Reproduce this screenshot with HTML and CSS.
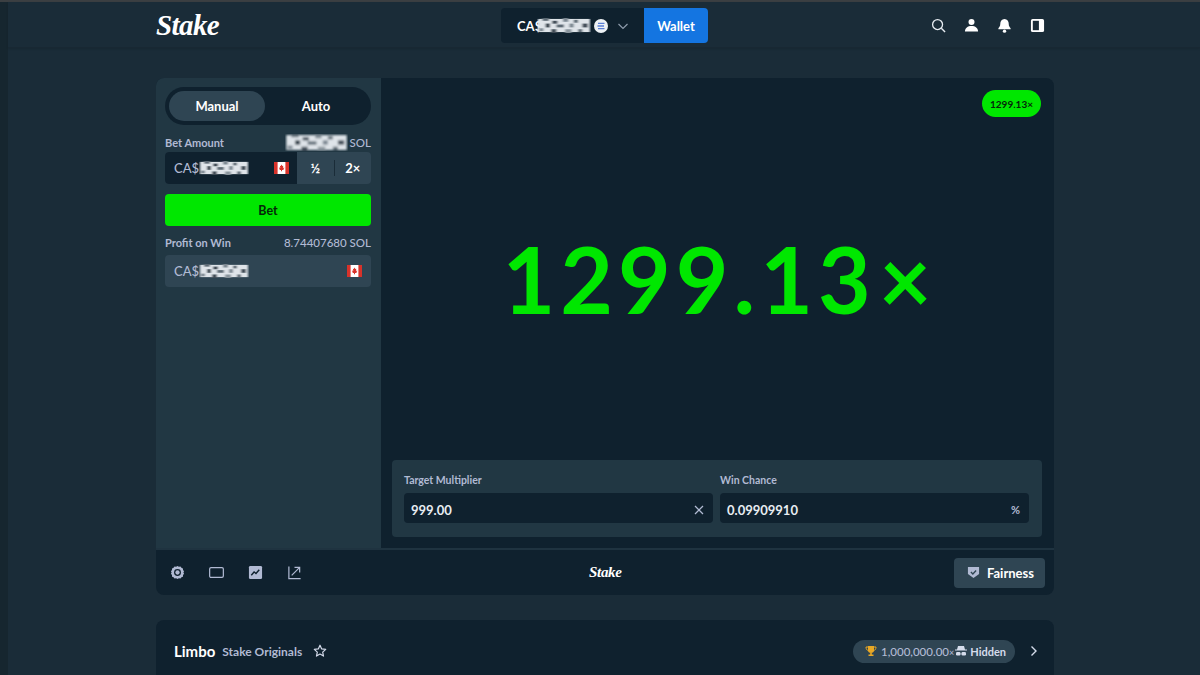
FILE: index.html
```html
<!DOCTYPE html>
<html lang="en">
<head>
<meta charset="utf-8">
<title>Limbo - Stake Originals</title>
<link rel="stylesheet" href="styles.css">
</head>
<body>
<svg class="defs" width="0" height="0" aria-hidden="true">
  <defs>
    <filter id="soft" x="-5%" y="-5%" width="110%" height="110%"><feGaussianBlur stdDeviation="0.85"/></filter>
    <symbol id="pix" viewBox="0 0 50 16" preserveAspectRatio="none">
      <g filter="url(#soft)">
        <rect x="1" y="1" width="48" height="14" fill="#dfe4e9"/>
        <rect x="5" y="0" width="6" height="3" fill="#5d6a74"/>
        <rect x="14" y="3" width="5" height="3" fill="#3f4c57"/>
        <rect x="24" y="0" width="5" height="4" fill="#7b8791"/>
        <rect x="34" y="2" width="4" height="3" fill="#5d6a74"/>
        <rect x="8" y="6" width="4" height="4" fill="#2f3c47"/>
        <rect x="18" y="7" width="7" height="3" fill="#5d6a74"/>
        <rect x="30" y="6" width="4" height="4" fill="#7b8791"/>
        <rect x="42" y="6" width="5" height="4" fill="#3f4c57"/>
        <rect x="2" y="11" width="4" height="3" fill="#7b8791"/>
        <rect x="13" y="12" width="5" height="4" fill="#3f4c57"/>
        <rect x="26" y="12" width="6" height="4" fill="#8a959d"/>
        <rect x="38" y="12" width="4" height="3" fill="#5d6a74"/>
      </g>
    </symbol>
    <symbol id="flag" viewBox="0 0 15 12">
      <rect width="15" height="12" rx="1" fill="#fff"/>
      <rect width="3.6" height="12" fill="#d8322a"/>
      <rect x="11.4" width="3.6" height="12" fill="#d8322a"/>
      <path d="M7.5 2.4l.9 1.7.9-.4-.4 2.2 1.2-.5.3.7-1 1 .3.8H8v1.4H7V7.900H5.500l.3-.8-1-1 .3-.7 1.200.5-.4-2.200.9.4z" fill="#d8322a"/>
    </symbol>
  </defs>
</svg>

<div class="topline"></div>
<div class="shell">
  <div class="rail"></div>
  <div class="main">
    <header class="header">
      <div class="wrap header-row">
        <span class="logo">Stake</span>
        <div class="balance">
          <div class="balance-val">
            <span class="ca">CA$</span>
            <svg class="pix pix-head"><use href="#pix"/></svg>
            <svg class="sol" viewBox="0 0 14 14"><circle cx="7" cy="7" r="7" fill="#eef2f5"/><path d="M4 4.300h6.500M3.500 7h6.500M4 9.700h6.500" stroke="#5b7fd6" stroke-width="1.300"/></svg>
            <svg class="chev" viewBox="0 0 12 12"><path d="M1.500 4l4.500 4.500L10.500 4" fill="none" stroke="#8e9bab" stroke-width="1.200"/></svg>
          </div>
          <div class="wallet">Wallet</div>
        </div>
        <div class="head-icons">
          <svg viewBox="0 0 16 16"><circle cx="7" cy="7" r="5.300" fill="none" stroke="#e8edf2" stroke-width="1.400"/><path d="M11 11l4 4" stroke="#e8edf2" stroke-width="1.500"/></svg>
          <svg viewBox="0 0 16 16"><circle cx="8" cy="4.200" r="3.200" fill="#fff"/><path d="M1 14.500c0-4 3-6 7-6s7 2 7 6z" fill="#fff"/></svg>
          <svg viewBox="0 0 16 16"><path d="M8 1c3 0 4.500 2.400 4.500 5.200 0 2.300.8 3.500 2 4.800v1H1.500v-1c1.200-1.300 2-2.500 2-4.800C3.500 3.400 5 1 8 1z" fill="#fff"/><circle cx="8" cy="14" r="1.800" fill="#fff"/></svg>
          <svg viewBox="0 0 16 16"><rect x="1" y="1" width="14" height="14" rx="1.800" fill="#fff"/><rect x="3" y="3" width="6.500" height="10" fill="#1a2c38"/></svg>
        </div>
      </div>
    </header>

    <main class="wrap content">
      <section class="game">
        <div class="game-top">
          <aside class="side">
            <div class="tabs">
              <span class="tab tab-on">Manual</span>
              <span class="tab tab-off">Auto</span>
            </div>
            <div class="lab lab-bet"><span>Bet Amount</span><span class="lab-r"><svg class="pix pix-sol"><use href="#pix"/></svg>SOL</span></div>
            <div class="betgroup">
              <div class="betinput">
                <span>CA$</span><svg class="pix pix-in"><use href="#pix"/></svg>
                <svg class="flag"><use href="#flag"/></svg>
              </div>
              <span class="mini">½</span><span class="vr"></span><span class="mini">2×</span>
            </div>
            <button class="bet">Bet</button>
            <div class="lab lab-profit"><span>Profit on Win</span><span class="lab-r">8.74407680 SOL</span></div>
            <div class="profit">
              <span>CA$</span><svg class="pix pix-in"><use href="#pix"/></svg>
              <svg class="flag"><use href="#flag"/></svg>
            </div>
          </aside>
          <div class="stage">
            <div class="stage-hist"><span class="hist">1299.13×</span></div>
            <div class="big">1299.13<span class="big-x">×</span></div>
            <div class="controls">
              <div class="ctl">
                <div class="ctl-lab">Target Multiplier</div>
                <div class="ctl-in"><span>999.00</span><svg class="ctl-ic" viewBox="0 0 10 10"><path d="M1 1l8 8M9 1L1 9" stroke="#b1bad3" stroke-width="1.300"/></svg></div>
              </div>
              <div class="ctl">
                <div class="ctl-lab">Win Chance</div>
                <div class="ctl-in"><span>0.09909910</span><span class="pct">%</span></div>
              </div>
            </div>
          </div>
        </div>
        <div class="footer">
          <div class="foot-icons">
            <svg viewBox="0 0 16 16"><path d="M8 1l1.500.8 1.700-.3 1 1.400 1.600.7.100 1.700 1.100 1.300-.7 1.400.7 1.400-1.100 1.300-.1 1.700-1.600.7-1 1.400-1.700-.3L8 15l-1.500-.8-1.700.3-1-1.400-1.600-.7-.1-1.700L1 9.400l.7-1.400L1 6.600l1.100-1.300.1-1.700 1.600-.7 1-1.400 1.700.3z" fill="#b1bad3"/><circle cx="8" cy="8" r="3.700" fill="#0f212e"/><circle cx="8" cy="8" r="2.300" fill="#b1bad3"/></svg>
            <svg viewBox="0 0 16 16"><rect x=".7" y="2.700" width="14.600" height="10.600" rx="1.500" fill="none" stroke="#b1bad3" stroke-width="1.300"/></svg>
            <svg viewBox="0 0 16 16"><rect x="1" y="1" width="14" height="14" rx="1.500" fill="#b1bad3"/><path d="M3.500 11l3-3.500 2 1.500 3.500-4" fill="none" stroke="#0f212e" stroke-width="1.500"/></svg>
            <svg viewBox="0 0 16 16"><path d="M2 1.500V14.500H14.500M5 11L13.500 2.500M8 2.500h5.500V8" fill="none" stroke="#b1bad3" stroke-width="1.300"/></svg>
          </div>
          <span class="logo logo-sm">Stake</span>
          <div class="fair">
            <svg viewBox="0 0 14 14"><path d="M1 1h12v7.500L7 13 1 8.500z" fill="#b1bad3"/><path d="M4.200 6.500L6.300 8.500l3.500-3.700" fill="none" stroke="#2f4553" stroke-width="1.500"/></svg>
            <span>Fairness</span>
          </div>
        </div>
      </section>

      <section class="info">
        <span class="info-title">Limbo</span>
        <span class="info-sub">Stake Originals</span>
        <svg class="star" viewBox="0 0 14 14"><path d="M7 1.200l1.700 3.700 4 .5-3 2.700.8 4L7 10.100l-3.500 2 .8-4-3-2.700 4-.5z" fill="none" stroke="#d5dceb" stroke-width="1.200" stroke-linejoin="round"/></svg>
        <div class="info-pill">
          <svg class="trophy" viewBox="0 0 12 12"><path d="M3 1h6v4.200C9 7 7.800 8 6 8S3 7 3 5.200z" fill="#e9a825"/><path d="M3 2H1c0 2 .8 3.200 2.200 3.500M9 2h2c0 2-.8 3.200-2.200 3.500" fill="none" stroke="#e9a825"/><path d="M5.200 8h1.600v1.500H8.500V11h-5V9.500h1.700z" fill="#e9a825"/></svg>
          <span class="amt">1,000,000.00<span class="amt-x">×</span></span>
          <svg class="spy" viewBox="0 0 12 12"><path d="M3 1h6l1 3.500h2v1H0v-1h2z" fill="#d5dceb"/><rect x="1" y="7" width="4.500" height="3.500" rx="1.200" fill="#d5dceb"/><rect x="6.500" y="7" width="4.500" height="3.500" rx="1.200" fill="#d5dceb"/></svg>
          <span class="hid">Hidden</span>
        </div>
        <svg class="next" viewBox="0 0 8 12"><path d="M1.500 1.500L6 6l-4.500 4.500" fill="none" stroke="#d5dceb" stroke-width="1.400"/></svg>
      </section>
    </main>
  </div>
</div>
</body>
</html>
```
FILE: styles.css
```css
* { box-sizing: border-box; }
html, body { margin: 0; height: 675px; overflow: hidden; }
body {
  background: #1a2c38;
  color: #fff;
  font-family: "Lato", "Liberation Sans", sans-serif;
  font-size: 12px;
  font-weight: 700;
}
.defs { display: block; height: 0; }
.topline { height: 2px; background: #3b3f42; }
.shell { display: flex; height: 673px; }
.rail { width: 8px; background: #16262f; flex: none; }
.main { flex: 1; min-width: 0; }
.wrap { width: 898px; margin-left: 148px; }

.header { height: 46px; border-bottom: 1px solid #182833; box-shadow: 0 1px 2px rgba(0,0,0,.12); }
.header-row {
  display: grid;
  grid-template-columns: 345px 207px 1fr;
  align-items: center;
  height: 46px;
}
.logo {
  font-family: "Liberation Serif", serif;
  font-style: italic;
  font-weight: 700;
  font-size: 29px;
  line-height: 1;
  letter-spacing: -.6px;
  color: #fff;
}
.balance {
  display: flex;
  height: 35px;
  margin-top: 1px;
  border-radius: 4px;
  overflow: hidden;
}
.balance-val {
  display: flex;
  align-items: center;
  flex: none;
  width: 143px;
  padding-left: 16px;
  background: #0f212e;
  font-size: 13px;
}
.ca { width: 20px; }
.pix { display: block; flex: none; }
.pix-head { width: 54px; height: 15px; }
.sol { width: 14px; height: 14px; margin-left: 3px; }
.chev { width: 12px; height: 12px; margin-left: 9px; }
.wallet {
  flex: none;
  width: 64px;
  display: flex;
  align-items: center;
  justify-content: center;
  background: #1475e1;
  font-size: 13px;
}
.head-icons {
  display: flex;
  justify-content: flex-end;
  gap: 18px;
  padding-right: 9px;
  margin-top: 1px;
}
.head-icons svg { width: 15px; height: 15px; display: block; }

.content { padding-top: 30px; }
.game { background: #0f212e; border-radius: 8px; overflow: hidden; height: 517px; }
.game-top { display: flex; height: 472px; border-bottom: 2px solid #1f3340; }
.side {
  width: 225px;
  flex: none;
  background: #213743;
  padding: 9px 10px 0 9px;
}
.tabs {
  display: flex;
  height: 38px;
  padding: 4px;
  background: #0f212e;
  border-radius: 19px;
}
.tab {
  display: flex;
  align-items: center;
  justify-content: center;
  border-radius: 15px;
  font-size: 13px;
}
.tab-on { flex: none; width: 96px; background: #2f4553; }
.tab-off { flex: 1; }
.lab {
  display: flex;
  justify-content: space-between;
  align-items: center;
  color: #b1bad3;
  font-size: 11px;
  height: 16px;
}
.lab-bet { margin-top: 9px; margin-bottom: 2px; }
.lab-profit { margin-top: 8px; margin-bottom: 5px; }
.lab-r { display: flex; align-items: center; font-weight: 500; font-size: 11.500px; }
.pix-sol { width: 63px; height: 17px; margin-right: 2px; }
.betgroup {
  display: flex;
  align-items: center;
  height: 32px;
  background: #2f4553;
  border-radius: 4px;
  overflow: hidden;
}
.betinput {
  width: 132px;
  height: 100%;
  flex: none;
  display: flex;
  align-items: center;
  padding: 0 8px 0 9px;
  background: #0f212e;
  color: #b1bad3;
  font-size: 13px;
  font-weight: 500;
}
.pix-in { width: 50px; height: 14px; }
.flag { width: 15px; height: 12px; margin-left: auto; }
.mini {
  flex: 1;
  text-align: center;
  font-size: 13px;
}
.vr { width: 1px; height: 16px; background: #1a2c38; flex: none; }
.bet {
  display: block;
  width: 100%;
  height: 32px;
  margin-top: 10px;
  border: 0;
  border-radius: 4px;
  background: #00e700;
  color: #05270a;
  font: inherit;
  font-size: 12.500px;
}
.profit {
  display: flex;
  align-items: center;
  height: 32px;
  padding: 0 9px;
  background: #2f4553;
  border-radius: 4px;
  color: #b1bad3;
  font-size: 13px;
  font-weight: 500;
}
.stage { flex: 1; display: flex; flex-direction: column; padding: 12px 12px 11px 11px; }
.stage-hist { display: flex; justify-content: flex-end; }
.hist {
  width: 59px;
  height: 27px;
  margin-right: 1px;
  display: flex;
  align-items: center;
  justify-content: center;
  border-radius: 14px;
  background: #00e700;
  color: #05270a;
  font-size: 10px;
  font-weight: 700;
}
.big {
  flex: 1;
  text-align: center;
  color: #00e700;
  font-size: 91px;
  font-weight: 700;
  line-height: 90px;
  padding-top: 117px;
  letter-spacing: 5px;
}
.big-x { margin-left: 3px; letter-spacing: 0; }
.controls {
  display: flex;
  gap: 7px;
  height: 77px;
  padding: 13px 13px 0 12px;
  background: #213743;
  border-radius: 4px;
}
.ctl { flex: 1; }
.ctl-lab { color: #b1bad3; font-size: 10.500px; height: 20px; line-height: 15px; }
.ctl-in {
  display: flex;
  align-items: center;
  justify-content: space-between;
  height: 30px;
  padding: 3px 9px 0 7px;
  background: #0f212e;
  border-radius: 4px;
  font-size: 13px;
  font-weight: 700;
  color: #e8edf2;
}
.ctl-ic { width: 10px; height: 10px; }
.pct { color: #b1bad3; font-size: 11px; }
.footer {
  height: 45px;
  display: flex;
  align-items: center;
  padding: 0 9px 0 14px;
}
.foot-icons { display: flex; gap: 24px; width: 419px; flex: none; }
.foot-icons svg { width: 15px; height: 15px; display: block; }
.logo-sm { font-size: 15px; letter-spacing: -.3px; }
.fair {
  margin-left: auto;
  width: 91px;
  height: 30px;
  display: flex;
  align-items: center;
  gap: 7px;
  padding-left: 13px;
  background: #2f4553;
  border-radius: 4px;
  font-size: 13px;
}
.fair svg { width: 13px; height: 13px; }

.info {
  margin-top: 25px;
  height: 70px;
  display: flex;
  align-items: center;
  padding: 0 16px 8px 18px;
  background: #0f212e;
  border-radius: 8px 8px 0 0;
}
.info-title { font-size: 15px; }
.info-sub { margin-left: 7px; color: #b1bad3; font-size: 12px; }
.star { width: 14px; height: 14px; margin-left: 11px; }
.info-pill {
  margin-left: auto;
  width: 162px;
  height: 23px;
  display: flex;
  align-items: center;
  padding-left: 12px;
  background: #2f4553;
  border-radius: 12px;
  color: #b1bad3;
  font-size: 11.500px;
  font-weight: 500;
}
.trophy { width: 12px; height: 12px; margin-right: 4px; flex: none; }
.amt-x { font-size: 9px; }
.spy { width: 12px; height: 12px; margin: 0 3px 0 1px; flex: none; }
.hid { color: #d5dceb; font-weight: 700; font-size: 11px; }
.next { width: 8px; height: 12px; margin-left: 15px; }
```
